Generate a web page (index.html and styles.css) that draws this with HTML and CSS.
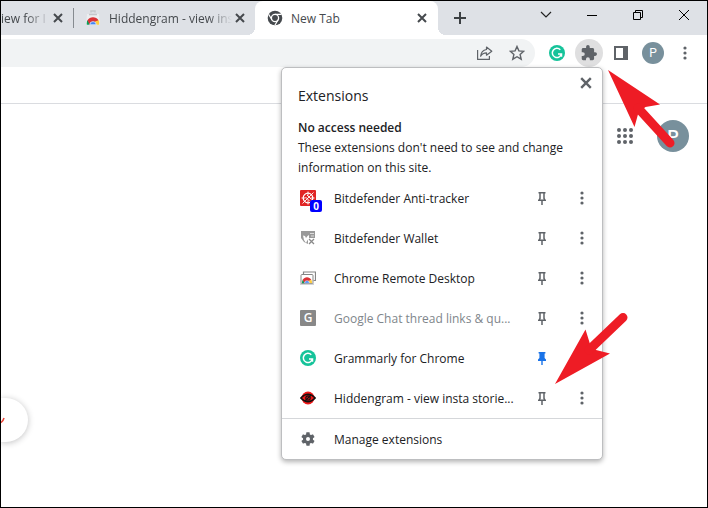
FILE: index.html
```html
<!DOCTYPE html>
<html lang="en">
<head>
<meta charset="utf-8">
<title>New Tab</title>
<link rel="stylesheet" href="styles.css">
</head>
<body>
<svg class="defs" aria-hidden="true">
  <symbol id="x" viewBox="0 0 10 10"><path d="M1 1l8 8M9 1L1 9" fill="none" stroke="currentColor" stroke-width="2"/></symbol>
  <symbol id="dots" viewBox="0 0 4 14"><circle cx="2" cy="2" r="1.6"/><circle cx="2" cy="7" r="1.6"/><circle cx="2" cy="12" r="1.6"/></symbol>
  <symbol id="pin" viewBox="0 0 8 13"><path d="M.5.7h7M2 1v5.500L.8 8.300h6.400L6 6.500V1M4 8v5" fill="none" stroke="currentColor" stroke-width="1.500"/></symbol>
  <symbol id="pinned" viewBox="0 0 8 13"><path d="M.6 0h6.800v1.500h-.8V6L8 7.500V9H4.700v4H3.300V9H0V7.500L1.400 6V1.500H.6z" fill="currentColor"/></symbol>
  <symbol id="grammarly" viewBox="0 0 16 16"><circle cx="8" cy="8" r="8" fill="#15c39a"/><path d="M11.300 4.800A4.600 4.600 0 1 0 12.400 9H9M12.500 8.300v3.400" fill="none" stroke="#fff" stroke-width="1.500"/></symbol>
  <symbol id="chromeball" viewBox="0 0 16 10"><path d="M0 10V8a8 8 0 0 1 1.500-4L5 10z" fill="#0f9d58"/><path d="M1.200 4.500A8 8 0 0 1 14.800 4.500L12 7H6L4 10z" fill="#db3236"/><path d="M14.800 4.500A8 8 0 0 1 16 10h-5l-.5-4z" fill="#ffcd40"/><path d="M4 10a4 4 0 0 1 8 0z" fill="#4285f4" stroke="#fff" stroke-width=".8"/></symbol>
</svg>
<div class="window">
  <header class="tabstrip">
    <div class="tab tab-first"><span class="tab-title">iew for I</span><button class="tab-close" aria-label="Close tab"><svg width="10" height="10"><use href="#x"/></svg></button></div>
    <div class="tab tab-second">
      <svg class="favicon" width="16" height="16" viewBox="0 0 16 16"><path d="M2 4h12l1 11H1z" fill="#eceef0"/><path d="M6 2.500V1h4v1.500" fill="none" stroke="#c4c7cb" stroke-width="1.500"/><path d="M4 4.500h8" stroke="#c4c7cb" stroke-width="1.500"/><use href="#chromeball" x="1.500" y="6.500" width="13" height="8.500"/></svg>
      <span class="tab-title">Hiddengram - view ins</span><button class="tab-close" aria-label="Close tab"><svg width="10" height="10"><use href="#x"/></svg></button>
    </div>
    <div class="tab tab-active">
      <svg class="favicon" width="16" height="16" viewBox="0 0 16 16"><circle cx="8" cy="8" r="7.300" fill="#45494d"/><circle cx="8" cy="8" r="3.600" fill="none" stroke="#fff" stroke-width="1.300"/><path d="M8 4.400h6.500M4.900 9.800L1.600 4.200M11.100 9.800L7.900 15.300" stroke="#fff" stroke-width="1.200"/></svg>
      <span class="tab-title">New Tab</span><button class="tab-close" aria-label="Close tab"><svg width="10" height="10"><use href="#x"/></svg></button>
    </div>
    <button class="new-tab" aria-label="New tab"><svg width="12" height="12" viewBox="0 0 12 12"><path d="M6 0v12M0 6h12" stroke="#3c4043" stroke-width="2"/></svg></button>
    <div class="controls">
      <button aria-label="Search tabs"><svg width="12" height="8" viewBox="0 0 12 8"><path d="M1 1l5 5 5-5" fill="none" stroke="#222" stroke-width="1.200"/></svg></button>
      <button aria-label="Minimize"><svg width="10" height="10" viewBox="0 0 10 10"><path d="M0 5.500h10" stroke="#000"/></svg></button>
      <button aria-label="Restore"><svg width="10" height="10" viewBox="0 0 10 10"><path d="M.5 2.500h7v7h-7zM2.500 2.500v-2h7v7h-2" fill="none" stroke="#000"/></svg></button>
      <button aria-label="Close"><svg width="10" height="10" viewBox="0 0 10 10"><path d="M0 0l10 10M10 0L0 10" stroke="#000"/></svg></button>
    </div>
  </header>
  <div class="toolbar">
    <div class="omnibox">
      <button class="tool" aria-label="Share"><svg width="16" height="14" viewBox="0 0 16 14"><path d="M.6 4v9.400h11.800V10M9.500 1l5.300 4.200-5.300 4V6.800C6.500 6.800 4.800 8 3.600 10.200 4 6.400 6 4 9.500 3.500z" fill="none" stroke="#5f6368" stroke-width="1.200" stroke-linejoin="round"/></svg></button>
      <button class="tool" aria-label="Bookmark"><svg width="16" height="16" viewBox="0 0 16 16"><path d="M8 1.500l1.900 4.400 4.800.4-3.600 3.200 1.100 4.700L8 11.700l-4.200 2.500 1.100-4.700L1.300 6.300l4.800-.4z" fill="none" stroke="#5f6368" stroke-width="1.400"/></svg></button>
    </div>
    <button class="tool" aria-label="Grammarly"><svg width="16" height="16"><use href="#grammarly"/></svg></button>
    <button class="tool tool-pressed" aria-label="Extensions"><svg width="16" height="16" viewBox="1 1 22 22"><path fill="#5f6368" d="M20.500 11H19V7c0-1.100-.9-2-2-2h-4V3.500a2.500 2.500 0 0 0-5 0V5H4c-1.100 0-2 .9-2 2v3.800h1.500a2.700 2.700 0 0 1 0 5.400H2V20c0 1.100.9 2 2 2h3.800v-1.500a2.700 2.700 0 0 1 5.400 0V22H17c1.100 0 2-.9 2-2v-4h1.500a2.500 2.500 0 0 0 0-5z"/></svg></button>
    <button class="tool" aria-label="Side panel"><svg width="14" height="14" viewBox="0 0 14 14"><path d="M1 1h12v12H1z" fill="none" stroke="#5f6368" stroke-width="2"/><path d="M9 1h4v12H9z" fill="#5f6368"/></svg></button>
    <button class="tool" aria-label="Profile"><span class="avatar">P</span></button>
    <button class="tool" aria-label="Menu"><svg class="dots" width="4" height="14"><use href="#dots"/></svg></button>
  </div>
  <div class="bookmarks"></div>
  <main class="page">
    <div class="account">
      <button class="apps" aria-label="Google apps"><svg width="16" height="16" viewBox="0 0 16 16" fill="#5f6368"><circle cx="2" cy="2" r="2"/><circle cx="8" cy="2" r="2"/><circle cx="14" cy="2" r="2"/><circle cx="2" cy="8" r="2"/><circle cx="8" cy="8" r="2"/><circle cx="14" cy="8" r="2"/><circle cx="2" cy="14" r="2"/><circle cx="8" cy="14" r="2"/><circle cx="14" cy="14" r="2"/></svg></button>
      <span class="avatar avatar-large">P</span>
    </div>
    <div class="doodle"><svg width="4" height="8" viewBox="0 0 4 8"><path d="M0 6.500Q2 5.500 3 2" fill="none" stroke="#ea4335" stroke-width="1.600"/></svg></div>
  </main>

  <section class="popup" aria-label="Extensions">
    <button class="popup-close" aria-label="Close"><svg width="12" height="12"><use href="#x"/></svg></button>
    <h1>Extensions</h1>
    <div class="access"><h2>No access needed</h2><p>These extensions don't need to see and change information on this site.</p></div>
    <ul>
      <li><span class="icon"><svg width="16" height="16" viewBox="0 0 16 16"><rect width="16" height="16" rx="1" fill="#e02424"/><circle cx="8" cy="8" r="4.800" fill="none" stroke="#fff" stroke-width="1.200"/><path d="M8 1.500v4M1.500 8h4M10.500 8h4M8 10.500v4M5.500 7l4 4M7 5l4.500 4.500M2.500 13.500l11-11" stroke="#fff" stroke-width=".9"/></svg><b class="badge">0</b></span><span class="name">Bitdefender Anti-tracker</span><button class="pin" aria-label="Pin"><svg width="8" height="13"><use href="#pin"/></svg></button><button class="more" aria-label="More"><svg class="dots" width="4" height="14"><use href="#dots"/></svg></button></li>
      <li><span class="icon"><svg width="16" height="16" viewBox="0 0 16 16"><path d="M1 1h14v8H8v5L4 12 1 8z" fill="#9a9a9a"/><path d="M3 5.500l2 .5 1 2 1.500-2L9 5v3l-2 3-1 2-2-3z" fill="#fff"/><path d="M10 3.500h4M11 6h3" stroke="#ddd"/><path d="M8 8h7v6H8z" fill="#fff"/><path d="M9 9l5 5M14 9l-5 5" stroke="#8a8a8a" stroke-width="1.300"/></svg></span><span class="name">Bitdefender Wallet</span><button class="pin" aria-label="Pin"><svg width="8" height="13"><use href="#pin"/></svg></button><button class="more" aria-label="More"><svg class="dots" width="4" height="14"><use href="#dots"/></svg></button></li>
      <li><span class="icon"><svg width="16" height="16" viewBox="0 0 16 16"><path d="M3.500 4V2h12v8.500h-2" fill="none" stroke="#858585" stroke-width="1.200"/><rect x="1" y="4.500" width="12" height="9" rx="1" fill="#fff" stroke="#858585"/><path d="M0 14h14" stroke="#aaa"/><use href="#chromeball" x="2" y="6.500" width="10" height="7"/></svg></span><span class="name">Chrome Remote Desktop</span><button class="pin" aria-label="Pin"><svg width="8" height="13"><use href="#pin"/></svg></button><button class="more" aria-label="More"><svg class="dots" width="4" height="14"><use href="#dots"/></svg></button></li>
      <li><span class="icon letter">G</span><span class="name muted">Google Chat thread links &amp; qu...</span><button class="pin" aria-label="Pin"><svg width="8" height="13"><use href="#pin"/></svg></button><button class="more" aria-label="More"><svg class="dots" width="4" height="14"><use href="#dots"/></svg></button></li>
      <li><span class="icon"><svg width="16" height="16"><use href="#grammarly"/></svg></span><span class="name">Grammarly for Chrome</span><button class="pin pin-on" aria-label="Unpin"><svg width="8" height="13"><use href="#pinned"/></svg></button><span class="more"></span></li>
      <li><span class="icon"><svg width="16" height="16" viewBox="0 0 16 16"><circle cx="8" cy="8" r="6.500" fill="#f01818"/><path d="M.8 8Q8 .6 15.200 8 8 15.400.8 8z" fill="none" stroke="#111" stroke-width="1.500"/><circle cx="8" cy="8" r="2.200" fill="#f01818" stroke="#111" stroke-width="1.200"/><path d="M5 11l6-6" stroke="#111" stroke-width="1.300"/></svg></span><span class="name">Hiddengram - view insta storie...</span><button class="pin" aria-label="Pin"><svg width="8" height="13"><use href="#pin"/></svg></button><button class="more" aria-label="More"><svg class="dots" width="4" height="14"><use href="#dots"/></svg></button></li>
    </ul>
    <button class="manage"><span class="icon"><svg width="16" height="16" viewBox="0 0 24 24"><path fill="#5f6368" fill-rule="evenodd" d="M19.400 13a7.500 7.500 0 0 0 0-2l2.100-1.600c.2-.2.200-.4.100-.6l-2-3.500c-.1-.2-.4-.3-.6-.2l-2.500 1a7 7 0 0 0-1.700-1l-.4-2.600c0-.3-.2-.5-.4-.5h-4c-.3 0-.5.2-.5.4l-.4 2.700a8 8 0 0 0-1.700 1l-2.500-1c-.2-.1-.5 0-.6.2l-2 3.500c-.1.200-.1.500.1.600L4.600 11a8 8 0 0 0 0 2l-2.200 1.600c-.2.200-.2.400-.1.600l2 3.500c.1.200.4.300.6.2l2.500-1c.5.400 1.100.7 1.700 1l.4 2.600c0 .3.200.5.500.5h4c.2 0 .4-.2.400-.4l.4-2.700a7 7 0 0 0 1.700-1l2.500 1c.2.100.5 0 .6-.2l2-3.500c.1-.2.100-.5-.1-.6zM12 15a3 3 0 1 1 0-6 3 3 0 0 1 0 6z"/></svg></span><span>Manage extensions</span></button>
  </section>
  <svg class="arrow arrow-toolbar" width="70" height="82" viewBox="0 0 70 82" aria-hidden="true"><path d="M0 0L52 34.500 37.500 37 30.500 42.500 26.500 57z" fill="#ee1c25"/><path d="M30 38l32 35" stroke="#ee1c25" stroke-width="9" stroke-linecap="round"/></svg>
  <svg class="arrow arrow-pin" width="74" height="74" viewBox="0 0 74 74" aria-hidden="true"><path d="M0 72L30.500 17.500 35 32 41 38 55 41.500z" fill="#ee1c25"/><path d="M34 38L68 5.500" stroke="#ee1c25" stroke-width="9" stroke-linecap="round"/></svg>
</div>
</body>
</html>
```
FILE: styles.css
```css
* { box-sizing: border-box; }
body { margin: 0; font-family: "Open Sans", "Noto Sans", sans-serif; font-size: 12px; color: #202124; }
button { display: flex; align-items: center; justify-content: center; padding: 0; border: 0; background: none; font: inherit; color: inherit; }
svg { display: block; flex: none; }
.defs { position: absolute; width: 0; height: 0; }
.window { position: relative; display: flex; flex-direction: column; min-height: 100vh; border: 1px solid #000; background: #fff; overflow: hidden; }

.tabstrip { display: flex; height: 34px; background: #dee1e6; }
.tab { position: relative; display: flex; align-items: center; color: #45494d; }
.tab-title { flex: 1; min-width: 0; white-space: nowrap; }
.tab-close { width: 16px; height: 16px; color: #45494d; }
.tab-first { width: 73px; padding-right: 8px; }
.tab-first::after { content: ""; position: absolute; right: 0; top: 7px; width: 1px; height: 20px; background: #868b90; }
.tab-first .tab-title, .tab-second .tab-title { -webkit-mask-image: linear-gradient(to left, transparent, #000 24px); mask-image: linear-gradient(to left, transparent, #000 24px); }
.tab-second { width: 181px; padding: 0 7px 0 11px; }
.favicon { margin-right: 8px; }
.tab-active { width: 183px; padding: 0 8px 0 12px; border-radius: 8px 8px 0 0; background: #fff; }
.tab-active::before, .tab-active::after { content: ""; position: absolute; bottom: 0; width: 8px; height: 8px; }
.tab-active::before { left: -8px; background: radial-gradient(circle at 0 0, #dee1e6 8px, #fff 8px); }
.tab-active::after { right: -8px; background: radial-gradient(circle at 100% 0, #dee1e6 8px, #fff 8px); }
.new-tab { width: 28px; margin-left: 8px; }
.controls { display: flex; margin-left: auto; height: 28px; }
.controls button { width: 46px; }

.toolbar { display: flex; gap: 4px; padding: 4px 8px 4px 0; }
.omnibox { display: flex; flex: 1; justify-content: flex-end; gap: 4px; margin-right: 4px; padding-right: 4px; border-radius: 0 14px 14px 0; background: #f1f3f4; }
.tool { width: 28px; height: 28px; border-radius: 50%; }
.tool-pressed { background: #dfdfe0; }
.dots { fill: #5f6368; }
.avatar { display: flex; align-items: center; justify-content: center; width: 22px; height: 22px; border-radius: 50%; background: #78909c; color: #fff; font: 12px Roboto, sans-serif; }
.avatar-large { width: 32px; height: 32px; font-size: 18px; font-weight: 500; }
.bookmarks { height: 33px; border-bottom: 1px solid #dadce0; }

.page { position: relative; flex: 1; }
.account { display: flex; justify-content: flex-end; gap: 16px; padding: 16px 18px 0 0; }
.apps { width: 32px; height: 32px; }
.doodle { position: absolute; left: 0; bottom: 65px; display: flex; align-items: center; width: 27px; height: 44px; border-radius: 0 22px 22px 0; background: #fff; box-shadow: 0 1px 6px rgba(32, 33, 36, .28); }

.popup { position: absolute; top: 66px; right: 104px; width: 322px; border: 1px solid #bdbec0; border-radius: 5px; background: #fff; box-shadow: 0 2px 5px rgba(0, 0, 0, .3); }
.popup-close { position: absolute; top: 7px; right: 8px; width: 16px; height: 16px; color: #5f6368; }
.popup h1 { margin: 0; padding: 16px 16px 10px; font-size: 14px; font-weight: 400; line-height: 24px; }
.access { padding: 0 24px 0 16px; line-height: 20px; }
.access h2 { margin: 0; font-size: 12px; font-weight: 600; }
.access p { margin: 0; }
.popup ul { margin: 0; padding: 0; list-style: none; }
.popup li { display: flex; align-items: center; height: 40px; padding: 0 6px 0 18px; }
.icon { position: relative; display: block; width: 16px; height: 16px; margin-right: 18px; }
.badge { position: absolute; left: 10px; top: 10px; width: 12px; height: 12px; border-radius: 2px; background: #00f; color: #fff; font-size: 10px; line-height: 12px; text-align: center; }
.letter { border-radius: 1px; background: #888; color: #fff; font-weight: 600; line-height: 16px; text-align: center; }
.name { flex: 1; white-space: nowrap; }
.muted { color: #80868b; }
.pin { width: 28px; height: 28px; color: #5f6368; }
.pin-on { color: #1a73e8; }
.more { width: 28px; height: 28px; margin-left: 12px; }
.manage { width: 100%; height: 41px; justify-content: flex-start; padding-left: 18px; border-top: 1px solid #d5d7da; }

.arrow { position: absolute; }
.arrow-toolbar { top: 69px; right: 29px; }
.arrow-pin { top: 311px; right: 78px; }
```
